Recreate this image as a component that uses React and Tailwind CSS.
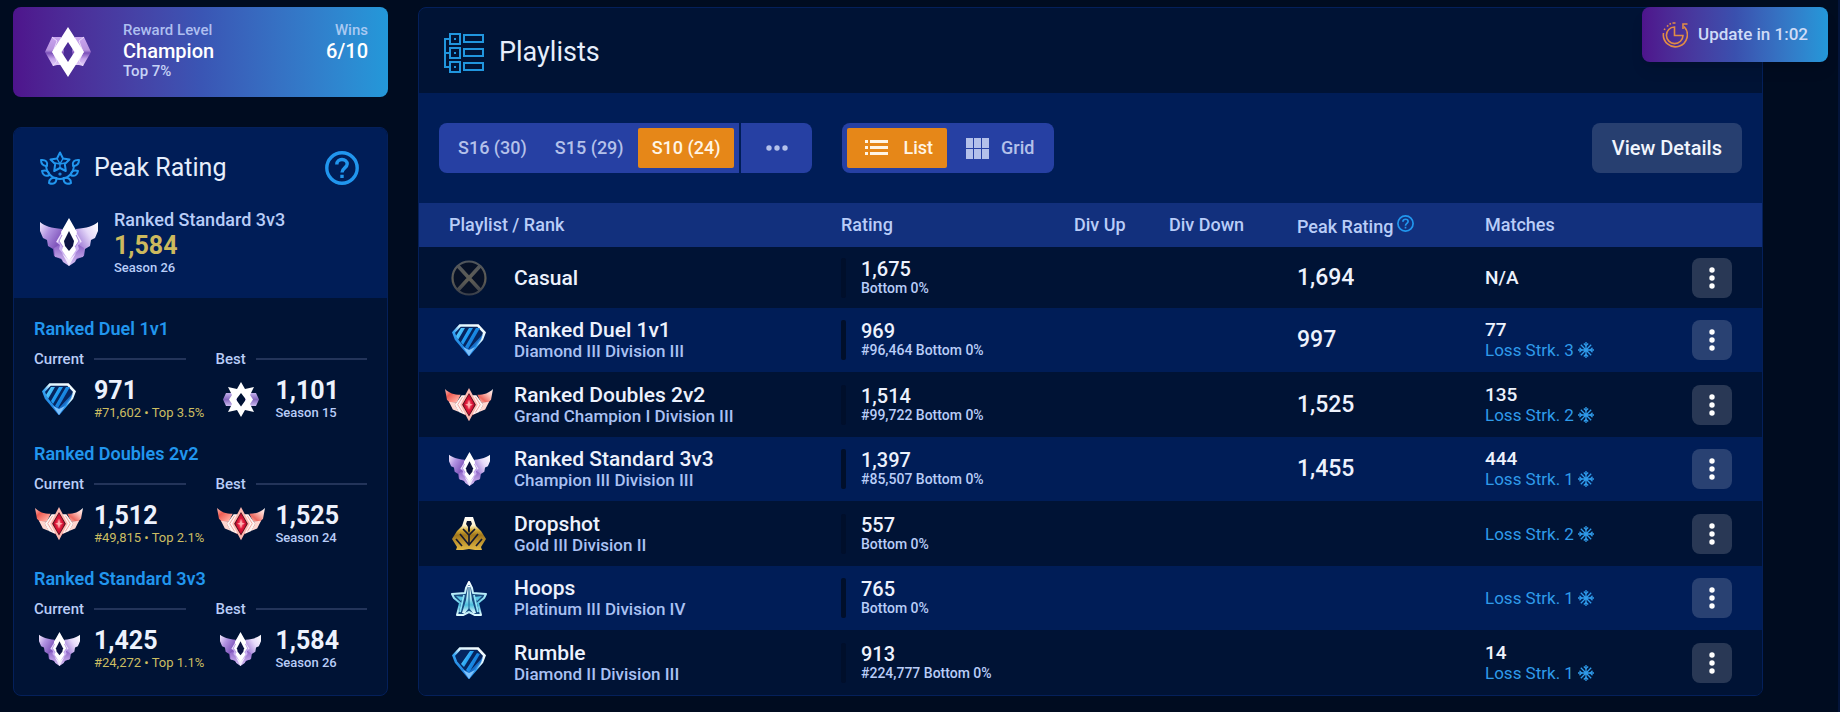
import React from "react";

function ChampionOne({ className }) {
  return (
    <svg viewBox="0 0 48 50" className={className} aria-hidden="true">
      <defs>
        <linearGradient id="c1" x1="0" y1="0" x2="0" y2="1">
          <stop offset="0" stopColor="#c9a6ee" />
          <stop offset="0.45" stopColor="#b792de" />
          <stop offset="0.55" stopColor="#7a4fb8" />
          <stop offset="0.75" stopColor="#c5a2ea" />
          <stop offset="1" stopColor="#e6d3fa" />
        </linearGradient>
      </defs>
      <path d="M8 10h9l3 15-3 13-4 0-4 1-8-14z" fill="url(#c1)" />
      <path d="M40 10h-9l-3 15 3 13 4 0 4 1 8-14z" fill="url(#c1)" />
      <path d="M8 10l5 4-4 11 4 9-4 5M40 10l-5 4 4 11-4 9 4 5" fill="none" stroke="#e9dafa" strokeWidth="1" />
      <path fillRule="evenodd" d="M24 0 40 25 24 50 8 25zM24 15l-6.500 10 6.500 10 6.500-10z" fill="#fff" />
    </svg>
  );
}

function ChampionTwo({ className }) {
  return (
    <svg viewBox="0 0 36 35" className={className} aria-hidden="true">
      <defs>
        <linearGradient id="c2" x1="0" y1="0" x2="0" y2="1">
          <stop offset="0" stopColor="#c3b0ec" />
          <stop offset="0.5" stopColor="#8467bd" />
          <stop offset="1" stopColor="#cdbcf0" />
        </linearGradient>
      </defs>
      <path d="M3 11h11v13H3L0 17.500z" fill="url(#c2)" />
      <path d="M33 11H22v13h11l3-6.500z" fill="url(#c2)" />
      <path
        fillRule="evenodd"
        d="M18 0l4 7 9-2-4 8 3 4.500-3 4.500 4 8-9-2-4 7-4-7-9 2 4-8-3-4.500 3-4.500-4-8 9 2zM18 11l-5 6.500 5 7 5-7z"
        fill="#fff"
      />
    </svg>
  );
}

function ChampionThree({ className }) {
  return (
    <svg viewBox="0 0 58 48" className={className} aria-hidden="true">
      <defs>
        <linearGradient id="c3l" x1="0" y1="0" x2="1" y2="0.8">
          <stop offset="0" stopColor="#f3ebfd" />
          <stop offset="0.3" stopColor="#b294e2" />
          <stop offset="0.65" stopColor="#7f55bb" />
          <stop offset="1" stopColor="#a27cd6" />
        </linearGradient>
        <linearGradient id="c3r" x1="1" y1="0" x2="0" y2="0.8">
          <stop offset="0" stopColor="#ffffff" />
          <stop offset="0.35" stopColor="#e6d9f9" />
          <stop offset="0.65" stopColor="#ac8cdd" />
          <stop offset="1" stopColor="#8259bd" />
        </linearGradient>
        <linearGradient id="c3b" x1="0" y1="0" x2="0" y2="1">
          <stop offset="0" stopColor="#8a5fc6" />
          <stop offset="1" stopColor="#d9c4f5" />
        </linearGradient>
      </defs>
      <path d="M0 4c5 4 11 6 22 7l7 18-6 13-9-4-1-7-5-3-1-6-4-2-3-7z" fill="url(#c3l)" />
      <path d="M58 4c-5 4-11 6-22 7l-7 18 6 13 9-4 1-7 5-3 1-6 4-2 3-7z" fill="url(#c3r)" />
      <path d="M14 30l7-4h16l7 4-1 9-6 1-2 4-6 4-6-4-2-4-6-1z" fill="url(#c3b)" />
      <path d="M24 10h10l8 14-4 3 1 4-10 12-10-12 1-4-4-3z" fill="#cbb0f0" />
      <path d="M17 24l7-11M41 24l-7-11" fill="none" stroke="#f0e6fd" strokeWidth="1.400" />
      <path d="M29 0 37 14l-1 3 3 6-4 6 1 3-7 11-7-11 1-3-4-6 3-6-1-3z" fill="#fff" />
      <path d="M22 17l-3 6 4 6M36 17l3 6-4 6" fill="none" stroke="#a987dc" strokeWidth="1" />
      <path d="M29 13 24 23l1 5 4 5 4-5 1-5z" fill="#0b1442" />
      <path d="M22 35l7 13 7-13-7 7z" fill="#f3eafe" />
    </svg>
  );
}

function GrandChampion({ className }) {
  return (
    <svg viewBox="0 0 49 34" className={className} aria-hidden="true">
      <defs>
        <linearGradient id="gl" x1="0" y1="0" x2="1" y2="1">
          <stop offset="0" stopColor="#ffc0b8" />
          <stop offset="0.35" stopColor="#ee5c52" />
          <stop offset="0.75" stopColor="#ff9d92" />
          <stop offset="1" stopColor="#ffd9d2" />
        </linearGradient>
        <linearGradient id="gr" x1="1" y1="0" x2="0" y2="1">
          <stop offset="0" stopColor="#ffffff" />
          <stop offset="0.35" stopColor="#ffc2ba" />
          <stop offset="0.7" stopColor="#ee6a60" />
          <stop offset="1" stopColor="#ffd0c8" />
        </linearGradient>
        <radialGradient id="gg">
          <stop offset="0" stopColor="#ff8b94" />
          <stop offset="0.5" stopColor="#e01839" />
          <stop offset="1" stopColor="#a80a2b" />
        </radialGradient>
      </defs>
      <path d="M0 1c4 4 9 6 16 6l-4 8H5l-3-3z" fill="url(#gl)" />
      <path d="M49 1c-4 4-9 6-16 6l4 8h7l3-3z" fill="url(#gr)" />
      <path d="M4 14l8 1 5 8-4 1-5-2zM45 14l-8 1-5 8 4 1 5-2z" fill="#ffd6cf" />
      <path d="M17 8 10 17l4 7 7 4h7l7-4 4-7-7-9z" fill="#5b1b26" />
      <path d="M17 7.500h4v20l-7-3-4-7.500zM32 7.500h-4v20l7-3 4-7.500z" fill="#fff3f0" />
      <path d="M18 9l-5 8 5 8M31 9l5 8-5 8" fill="none" stroke="#f0a79f" strokeWidth="1" />
      <path d="M24.500 0l9 17-9 17-9-17z" fill="#ffb9b0" />
      <path d="M24.500 5l7 12-7 12-7-12z" fill="#421019" />
      <path d="M24.500 6l6 11-6 11-6-11z" fill="url(#gg)" />
      <path d="M24.500 12l1 4 3 1-3 1-1 4-1-4-3-1 3-1z" fill="#ffb3b3" />
    </svg>
  );
}

function Diamond({ className, stripes = 3 }) {
  return (
    <svg viewBox="0 0 34 32" className={className} aria-hidden="true">
      <defs>
        <linearGradient id="dm" x1="0" y1="0" x2="1" y2="0.600">
          <stop offset="0" stopColor="#6fdcff" />
          <stop offset="0.5" stopColor="#1f9bf2" />
          <stop offset="1" stopColor="#0f66c8" />
        </linearGradient>
        <linearGradient id="de" x1="1" y1="0" x2="0.300" y2="1">
          <stop offset="0" stopColor="#ffffff" />
          <stop offset="0.4" stopColor="#d9f4ff" />
          <stop offset="0.6" stopColor="#37a6f4" />
          <stop offset="1" stopColor="#1673d6" />
        </linearGradient>
      </defs>
      <path d="M8 1.500h18l6.500 7L30 15 17 30.500 4 15 1.500 8.500z" fill="#05255f" stroke="url(#de)" strokeWidth="2.600" />
      {stripes === 3 ? (
        <path d="M4 12 9 4h4L6 16zM9 18 17 4h4l-10 17zM13 23 24 4h4L16 25z" fill="url(#dm)" />
      ) : (
        <path d="M9 17 18 4h4L12 20zM14 23 25 6l3 1-11 19z" fill="url(#dm)" />
      )}
      <path d="M31 10l-2 6-12 15-7-9 7 3z" fill="#1b7ee0" opacity="0.800" />
      <path d="M17 32l-6-9 6 3 6-3z" fill="#7cc1fc" />
    </svg>
  );
}

function Gold({ className }) {
  return (
    <svg viewBox="0 0 34 33" className={className} aria-hidden="true">
      <defs>
        <linearGradient id="go" x1="0" y1="0" x2="0" y2="1">
          <stop offset="0" stopColor="#fff" />
          <stop offset="0.250" stopColor="#fff4cf" />
          <stop offset="0.400" stopColor="#d4ab35" />
          <stop offset="0.550" stopColor="#a0761c" />
          <stop offset="1" stopColor="#e3b945" />
        </linearGradient>
      </defs>
      <path d="M13 0h8l3 9 5 5 5 8-5 8 1 3h-7l-6-1-6 1H4l1-3-5-8 5-8 5-5z" fill="url(#go)" />
      <path d="M15 4h4l1 3-2 3v4l-1 2-1-2v-4l-2-3z" fill="#0a142c" />
      <path d="M11 12l6 6 6-6M17 18v10M8 17l9 11 9-11M4 22l6 7M30 22l-6 7" fill="none" stroke="#171a30" strokeWidth="1.700" />
    </svg>
  );
}

function Platinum({ className }) {
  return (
    <svg viewBox="0 0 36 35" className={className} aria-hidden="true">
      <defs>
        <linearGradient id="pl" x1="0" y1="0" x2="0" y2="1">
          <stop offset="0" stopColor="#fff" />
          <stop offset="0.450" stopColor="#a5e8f7" />
          <stop offset="0.700" stopColor="#4cbcdc" />
          <stop offset="1" stopColor="#e2fbff" />
        </linearGradient>
      </defs>
      <path d="M18 1l3 6 1 5 13 1-2 4-6 5 3 12h-6l-6-3-6 3H6l3-12-6-5-2-4 13-1 1-5z" fill="#174a80" stroke="url(#pl)" strokeWidth="2" strokeLinejoin="round" />
      <path d="M17 5h2l2 14 4 13h-3l-4-5-4 5h-3l4-13z" fill="url(#pl)" />
      <path d="M18 6v22" stroke="#296d9c" strokeWidth="1.200" />
      <path d="M5 15l8 1-3 4zM31 15l-8 1 3 4z" fill="#58c5e4" />
      <path d="M13 14l-4 17M23 14l4 17" stroke="#8fe2f6" strokeWidth="1.800" />
    </svg>
  );
}

function Casual({ className }) {
  return (
    <svg viewBox="0 0 36 36" className={className} aria-hidden="true">
      <defs>
        <linearGradient id="cs" gradientUnits="userSpaceOnUse" x1="0" y1="0" x2="0" y2="36">
          <stop offset="0" stopColor="#4e545c" />
          <stop offset="0.550" stopColor="#5f5d55" />
          <stop offset="1" stopColor="#363c49" />
        </linearGradient>
      </defs>
      <circle cx="18" cy="18" r="16.500" fill="#071126" stroke="url(#cs)" strokeWidth="2.200" />
      <path d="M7 6l22 24M29 6 7 30" stroke="url(#cs)" strokeWidth="3.600" />
    </svg>
  );
}

function Laurel({ className }) {
  return (
    <svg viewBox="0 0 40 34" className={className} fill="none" stroke="currentColor" strokeWidth="2" strokeLinejoin="round" aria-hidden="true">
      <path d="M20 1.500l3 6 6.500 1-4.700 4.500 1 7L20 17l-5.800 3 1-7-4.700-4.500 6.500-1z" />
      <path d="M20 17v-4l-5-1M20 13l5-1M17 7.500l3 5.500 3-5.500" strokeWidth="1.400" />
      <path d="M6 15c1 8 7 13 14 13s13-5 14-13" />
      <path d="M1 9c5-.5 7 2 6 6-4 0-6-2-6-6zM39 9c-5-.5-7 2-6 6 4 0 6-2 6-6z" />
      <path d="M2 20c4-1.500 6.500 0 7.500 4-4 2-7 0-7.500-4zM38 20c-4-1.500-6.500 0-7.500 4 4 2 7 0 7.500-4z" />
      <path d="M9 32c0-4 3-6 7.500-5 0 5-3 7-7.500 5zM31 32c0-4-3-6-7.500-5 0 5 3 7 7.500 5z" />
      <circle cx="20" cy="23" r="0.600" />
    </svg>
  );
}

function PlaylistsIcon({ className }) {
  return (
    <svg viewBox="0 0 40 40" className={className} fill="none" stroke="currentColor" strokeWidth="2" aria-hidden="true">
      <path d="M6 6H1v28h5M1 20h5" />
      {[1, 15, 29].map((y) => (
        <g key={y}>
          <rect x="6" y={y} width="10" height="10" />
          <rect x="20" y={y + 1} width="19" height="7" />
          <rect x="10" y={y + 4} width="2" height="2" fill="currentColor" stroke="none" />
        </g>
      ))}
    </svg>
  );
}

function HelpIcon({ className }) {
  return (
    <svg viewBox="0 0 34 34" className={className} fill="none" stroke="currentColor" strokeWidth="3.400" aria-hidden="true">
      <circle cx="17" cy="17" r="15.200" />
      <path d="M11.800 13.500c0-3.200 2.300-5 5.200-5s5.200 1.900 5.200 4.600c0 3.700-5.200 4-5.200 8.400" />
      <path d="M17 23.700V27" />
    </svg>
  );
}

function UpdateIcon({ className }) {
  return (
    <svg viewBox="0 0 26 26" className={className} fill="none" stroke="currentColor" strokeWidth="1.600" aria-hidden="true">
      <path d="M22 4.500A12 12 0 1 1 1.500 11" />
      <path d="M2.300 8l.6-1.300M5 4.500l1.300-1.200M7.500 2.200l1.500-.6M10.500 1h3" />
      <path d="M25.500 2H21v5" />
      <path d="M12.500 5A8.300 8.300 0 1 0 21 13.500h-8.500z" />
    </svg>
  );
}

function ListIcon({ className }) {
  return (
    <svg viewBox="0 0 24 18" className={className} fill="currentColor" aria-hidden="true">
      {[1, 7, 13].map((y) => (
        <g key={y}>
          <rect x="0" y={y} width="3" height="3" />
          <rect x="5" y={y} width="18" height="3" />
        </g>
      ))}
    </svg>
  );
}

function GridIcon({ className }) {
  return (
    <svg viewBox="0 0 23 21" className={className} fill="currentColor" aria-hidden="true">
      {[0, 8, 16].map((x) => (
        <g key={x}>
          <rect x={x} y="0" width="7" height="10" />
          <rect x={x} y="11" width="7" height="10" />
        </g>
      ))}
    </svg>
  );
}

function Snowflake({ className }) {
  return (
    <svg viewBox="0 0 16 16" className={className} fill="none" stroke="currentColor" strokeWidth="1.300" aria-hidden="true">
      <path d="M8 0v16M0 8h16M2.800 2.800l10.400 10.400M13.200 2.800 2.800 13.200" />
      <path d="M5.800 1.500 8 3.700l2.200-2.200M5.800 14.500 8 12.300l2.200 2.200M1.500 5.800 3.700 8l-2.200 2.200M14.500 5.800 12.300 8l2.200 2.200" />
    </svg>
  );
}

function Dots({ className }) {
  return (
    <svg viewBox="0 0 22 6" className={className} fill="currentColor" aria-hidden="true">
      <circle cx="3" cy="3" r="2.700" />
      <circle cx="11" cy="3" r="2.700" />
      <circle cx="19" cy="3" r="2.700" />
    </svg>
  );
}

const peaks = [
  {
    name: "Ranked Duel 1v1",
    current: { icon: <Diamond className="w-[34px]" />, value: "971", note: "#71,602 • Top 3.5%" },
    best: { icon: <ChampionTwo className="w-9" />, value: "1,101", note: "Season 15" },
  },
  {
    name: "Ranked Doubles 2v2",
    current: { icon: <GrandChampion className="w-12" />, value: "1,512", note: "#49,815 • Top 2.1%" },
    best: { icon: <GrandChampion className="w-12" />, value: "1,525", note: "Season 24" },
  },
  {
    name: "Ranked Standard 3v3",
    current: { icon: <ChampionThree className="w-[41px]" />, value: "1,425", note: "#24,272 • Top 1.1%" },
    best: { icon: <ChampionThree className="w-[41px]" />, value: "1,584", note: "Season 26" },
  },
];

const rows = [
  { icon: <Casual className="w-9" />, name: "Casual", rating: "1,675", note: "Bottom 0%", peak: "1,694", matches: "N/A" },
  { icon: <Diamond className="w-[34px]" />, name: "Ranked Duel 1v1", rank: "Diamond III Division III", rating: "969", note: "#96,464 Bottom 0%", peak: "997", matches: "77", streak: 3 },
  { icon: <GrandChampion className="w-12" />, name: "Ranked Doubles 2v2", rank: "Grand Champion I Division III", rating: "1,514", note: "#99,722 Bottom 0%", peak: "1,525", matches: "135", streak: 2 },
  { icon: <ChampionThree className="w-[41px]" />, name: "Ranked Standard 3v3", rank: "Champion III Division III", rating: "1,397", note: "#85,507 Bottom 0%", peak: "1,455", matches: "444", streak: 1 },
  { icon: <Gold className="w-[34px]" />, name: "Dropshot", rank: "Gold III Division II", rating: "557", note: "Bottom 0%", streak: 2 },
  { icon: <Platinum className="w-9" />, name: "Hoops", rank: "Platinum III Division IV", rating: "765", note: "Bottom 0%", streak: 1 },
  { icon: <Diamond className="w-[34px]" stripes={2} />, name: "Rumble", rank: "Diamond II Division III", rating: "913", note: "#224,777 Bottom 0%", matches: "14", streak: 1 },
];

function PeakEntry({ label, entry, gold }) {
  return (
    <div className="min-w-0 whitespace-nowrap">
      <div className="flex h-5 items-center gap-2.5 text-[15px] font-medium text-[#b9cdf8]">
        {label}
        <span className="h-0.5 flex-1 bg-[#23345a]" />
      </div>
      <div className="mt-2 flex items-center gap-2.5">
        <span className="flex w-[50px] shrink-0 justify-center">{entry.icon}</span>
        <div>
          <div className="text-[25px] leading-7 font-bold text-[#edf2fd]">{entry.value}</div>
          <div className={gold ? "text-[13px] leading-4 text-[#ccbe62]" : "text-[13px] leading-4 font-medium text-[#b9cdf8]"}>
            {entry.note}
          </div>
        </div>
      </div>
    </div>
  );
}

function RewardCard() {
  return (
    <section className="flex h-[90px] rounded-lg bg-linear-to-r from-[#4e148c] via-[#3a55b4] to-[#2398d9] px-5 pt-[13px] text-[#c6d3f6]">
      <div className="-mt-[13px] mr-5 flex w-[70px] items-center justify-center">
        <ChampionOne className="w-12" />
      </div>
      <div className="flex-1 font-medium">
        <p className="text-[15px] leading-5 text-[#aebff0]">Reward Level</p>
        <p className="text-xl leading-[22px] text-white">Champion</p>
        <p className="text-[15px] leading-[18px]">Top 7%</p>
      </div>
      <div className="text-right font-medium">
        <p className="text-[15px] leading-5 text-[#a9c9f2]">Wins</p>
        <p className="text-xl leading-[22px] text-white">6/10</p>
      </div>
    </section>
  );
}

function PeakCard() {
  return (
    <section className="flex flex-1 flex-col overflow-hidden rounded-lg border border-[#04205a] bg-[#001335]">
      <div className="h-[170px] bg-[#001d57] pt-5 pr-7 pl-[26px]">
        <div className="flex h-10 items-center">
          <Laurel className="w-10 text-[#2196ee]" />
          <h2 className="ml-3.5 flex-1 text-[25px] text-[#e6eefc]">Peak Rating</h2>
          <button type="button" aria-label="About peak rating" className="text-[#2196ee]">
            <HelpIcon className="w-[34px]" />
          </button>
        </div>
        <div className="mt-5 flex items-center gap-4">
          <ChampionThree className="w-[58px]" />
          <div className="font-medium text-[#b9cdf8]">
            <p className="text-lg leading-6">Ranked Standard 3v3</p>
            <p className="text-[25px] leading-7 font-bold text-[#cdb95e]">1,584</p>
            <p className="text-[13px] leading-4">Season 26</p>
          </div>
        </div>
      </div>
      <div className="flex flex-col gap-5 px-5 pt-[19px]">
        {peaks.map((p) => (
          <div key={p.name} className="h-[105px]">
            <h3 className="mb-2 text-lg leading-6 font-semibold text-[#2196ee]">{p.name}</h3>
            <div className="grid grid-cols-2 gap-[30px]">
              <PeakEntry label="Current" entry={p.current} gold />
              <PeakEntry label="Best" entry={p.best} />
            </div>
          </div>
        ))}
      </div>
    </section>
  );
}

function Toolbar() {
  return (
    <div className="flex h-[110px] items-center bg-[#001d57] px-5 text-lg font-medium text-[#b4c1ea]">
      <div className="flex h-[50px] gap-0.5">
        <div className="flex rounded-l-lg bg-[#2640a3] p-[5px]">
          <button type="button" className="px-3.5">S16 (30)</button>
          <button type="button" className="px-3.5">S15 (29)</button>
          <button type="button" className="rounded-xs bg-[#e68718] px-3.5 text-[#fff5e6]">S10 (24)</button>
        </div>
        <button type="button" aria-label="More seasons" className="flex w-[71px] items-center justify-center rounded-r-lg bg-[#2640a3]">
          <Dots className="w-[22px]" />
        </button>
      </div>
      <div className="ml-[30px] flex h-[50px] rounded-lg bg-[#2640a3] p-[5px]">
        <button type="button" className="flex items-center gap-3.5 rounded-xs bg-[#e68718] pr-3.5 pl-[18px] text-[#fff5e6]">
          <ListIcon className="w-6" />
          List
        </button>
        <button type="button" className="flex items-center gap-3 pr-[15px] pl-[19px]">
          <GridIcon className="w-[23px]" />
          Grid
        </button>
      </div>
      <button type="button" className="ml-auto h-[50px] rounded-lg bg-[#273f70] px-5 text-xl font-medium text-[#f1f5fd]">
        View Details
      </button>
    </div>
  );
}

function PlaylistTable() {
  return (
    <table className="w-full table-fixed border-collapse text-left font-medium whitespace-nowrap">
      <colgroup>
        <col />
        <col className="w-[233px]" />
        <col className="w-[95px]" />
        <col className="w-[128px]" />
        <col className="w-[188px]" />
        <col className="w-[200px]" />
        <col className="w-[77px]" />
      </colgroup>
      <thead>
        <tr className="h-11 bg-[#12307d] text-lg text-[#b9cdf8]">
          <th className="p-0 pl-[30px] font-medium">Playlist / Rank</th>
          <th className="p-0 font-medium">Rating</th>
          <th className="p-0 font-medium">Div Up</th>
          <th className="p-0 font-medium">Div Down</th>
          <th className="p-0 font-medium">
            <span className="flex items-start gap-1">
              <span className="pt-1 leading-6">Peak Rating</span>
              <HelpIcon className="mt-1 w-[17px] text-[#2196ee]" />
            </span>
          </th>
          <th className="p-0 font-medium">Matches</th>
          <th className="p-0" aria-label="Actions" />
        </tr>
      </thead>
      <tbody className="text-[#edf2fd]">
        {rows.map((r) => (
          <tr key={r.name} className="h-[65px] bg-[#001335] first:h-[61px] even:h-16 even:bg-[#001d57]">
            <td className="p-0 pl-[25px]">
              <div className="flex items-center gap-5">
                <span className="flex w-[50px] shrink-0 justify-center">{r.icon}</span>
                <div>
                  <div className="text-[21px] leading-[22px]">{r.name}</div>
                  {r.rank && <div className="text-[17px] leading-5 text-[#a9c1f3]">{r.rank}</div>}
                </div>
              </div>
            </td>
            <td className="p-0">
              <div className="flex items-center gap-[15px]">
                <span className="h-10 w-[5px] rounded-xs bg-[#000f2b]" />
                <div>
                  <div className="text-xl leading-5">{r.rating}</div>
                  <div className="text-sm leading-[18px] text-[#b9cdf8]">{r.note}</div>
                </div>
              </div>
            </td>
            <td className="p-0" />
            <td className="p-0" />
            <td className="p-0 text-[23px] leading-7">{r.peak}</td>
            <td className="p-0">
              {r.matches && <div className="text-[19px] leading-5">{r.matches}</div>}
              {r.streak && (
                <div className="flex items-center gap-1 text-[17px] leading-5 font-normal text-[#2f9bea]">
                  Loss Strk. {r.streak}
                  <Snowflake className="w-4" />
                </div>
              )}
            </td>
            <td className="p-0 pr-[30px]">
              <button type="button" aria-label={`${r.name} options`} className="ml-auto flex size-10 items-center justify-center rounded-lg bg-white/16 text-white">
                <Dots className="w-[22px] rotate-90" />
              </button>
            </td>
          </tr>
        ))}
      </tbody>
    </table>
  );
}

export default function App() {
  return (
    <div className="relative flex min-h-screen gap-[30px] border-r-2 border-[#03143a] bg-[#000c20] pt-[7px] pr-[75px] pb-[17px] pl-[13px] font-['Roboto',sans-serif]">
      <aside className="flex w-[375px] shrink-0 flex-col gap-[30px]">
        <RewardCard />
        <PeakCard />
      </aside>
      <main className="min-w-0 flex-1 self-start overflow-hidden rounded-lg border border-[#04205a] bg-[#001335]">
        <header className="flex h-[85px] items-center gap-[15px] px-[25px] pt-1 text-[#e6eefc]">
          <PlaylistsIcon className="w-10 text-[#2196de]" />
          <h1 className="text-[27px]">Playlists</h1>
        </header>
        <Toolbar />
        <PlaylistTable />
      </main>
      <div className="absolute top-[7px] right-2.5 flex h-[55px] items-center gap-2.5 rounded-lg bg-linear-to-r from-[#4e148c] via-[#3a50ae] to-[#2398d9] px-5 text-[17px] font-medium text-[#cfdcf7] shadow-lg">
        <UpdateIcon className="w-[26px] text-[#e28c45]" />
        Update in 1:02
      </div>
    </div>
  );
}
